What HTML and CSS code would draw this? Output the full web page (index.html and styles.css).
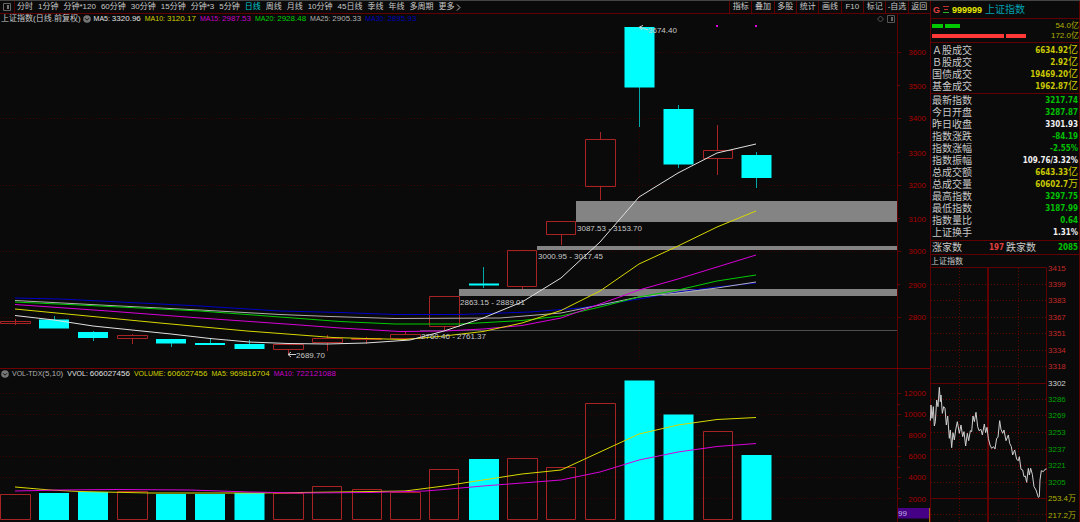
FILE: index.html
```html
<!DOCTYPE html>
<html lang="zh-CN">
<head>
<meta charset="utf-8">
<title>上证指数</title>
<link rel="stylesheet" href="styles.css">
</head>
<body>
<div class="app">
  <main class="main">
    <header class="toolbar">
      <button class="panel-toggle" aria-label="面板"><svg width="8" height="8" viewBox="0 0 8 8"><path d="M.5.5h7v7h-7z" fill="none" stroke="#666"/><path d="M4 2h2v4H4z" fill="#777"/></svg></button>
      <nav class="periods">
        <button>分时</button><button>1分钟</button><button>分钟*120</button><button>60分钟</button><button>30分钟</button><button>15分钟</button><button>分钟*3</button><button>5分钟</button><button class="active">日线</button><button>周线</button><button>月线</button><button>10分钟</button><button>45日线</button><button>季线</button><button>年线</button><button>多周期</button><button class="more">更多<svg width="5" height="7" viewBox="0 0 5 7"><path d="M1 .5 4 3.500 1 6.500" fill="none" stroke="#bbb"/></svg></button>
      </nav>
      <nav class="tools">
        <button>指标</button><button>叠加</button><button>多股</button><button>统计</button><button>画线</button><button>F10</button><button>标记</button><button>-自选</button><button>返回</button>
      </nav>
    </header>

    <section class="pane">
      <div class="legend-row">
        <div class="legend">
          <span class="title">上证指数(日线.前复权)</span>
          <svg class="round" width="8" height="8" viewBox="0 0 8 8"><circle cx="4" cy="4" r="3.800" fill="#777"/><path d="M2 3.200 4 5.200 6 3.200" fill="none" stroke="#111"/></svg>
          <span class="c-white">MA5: <b>3320.96</b></span><span class="c-yellow">MA10: <b>3120.17</b></span><span class="c-magenta">MA15: <b>2987.53</b></span><span class="c-green">MA20: <b>2928.48</b></span><span class="c-gray">MA25: <b>2905.33</b></span><span class="c-blue">MA30: <b>2895.93</b></span>
          <svg class="corner" width="18" height="8" viewBox="0 0 18 8"><path d="M3.500 1 6.500 4 3.500 7 .5 4z" fill="none" stroke="#555"/><path d="M10.500.5h7v7h-7z" fill="none" stroke="#555"/><path d="M14 2h2v4h-2z" fill="#666"/></svg>
        </div>
        <div class="axis-head"></div>
      </div>
      <svg class="plot" viewBox="0 24 930 344">
        <path class="grid" d="M0 52.500H897M0 118.500H897M0 185.500H897M0 251.500H897M0 317.500H897M639.500 128V360"/>
        <path class="axis" d="M897.500 24V368M898 52.500h3M898 85.500h2M898 118.500h3M898 152.500h2M898 185.500h3M898 218.500h2M898 251.500h3M898 284.500h2M898 317.500h3"/>
        <g class="axis-text">
          <text x="926" y="55">3600</text><text x="926" y="89">3500</text><text x="926" y="121">3400</text><text x="926" y="156">3300</text><text x="926" y="188">3200</text><text x="926" y="222">3100</text><text x="926" y="254">3000</text><text x="926" y="288">2900</text><text x="926" y="320">2800</text>
        </g>
        <path class="gap" d="M576 201H897V222H576zM537 246H897V250H537zM459 289H897V296H459z"/>
        <path class="gap-line" d="M420 330.500H897"/>
        <path class="up" d="M.5 321.500h30v2h-30zM15.500 319v6M117.500 335.500h30v3h-30zM132.500 334v1M132.500 339v5M273.500 344.500h30v5h-30zM288.500 350v4M312.500 338.500h30v4h-30zM327.500 335v3M327.500 343v8M351.500 338.500h30v1h-30zM366.500 337v7M390.500 334.500h30v4h-30zM405.500 331v3M429.500 296.500h30v30h-30zM444.500 327v4M507.500 250.500h29v36h-29zM522.500 287v2M546.500 221.500h29v13h-29zM561.500 235v10M585.500 139.500h30v47h-30zM600.500 132v7M600.500 187v13M703.500 150.500h29v8h-29zM717.500 125v25M717.500 159v16"/>
        <path class="wick" d="M54.500 316v4M93.500 331v10M171.500 343v4M210.500 338v7M249.500 340v4M483.500 267v21M639.500 87v40M678.500 105v63M756.500 152v36"/>
        <path class="down" d="M39 319.500h30v9H39zM78 332h30v6H78zM156 339h30v4.500h-30zM195 343h30v2h-30zM234.500 344h30v5h-30zM469 283.500h30v2h-30zM624.500 27h30v60.500h-30zM663.500 109h30v55.500h-30zM741.500 155h30v23h-30z"/>
        <g class="lines">
          <polyline stroke="#0000c8" points="15,298 60,299 100,301 200,306 280,311 340,312.500 395,314.500 460,314.500 530,312 580,308 639,299 678,292 717,287 756,283"/>
          <polyline stroke="#b0b0b0" points="15,300.500 100,305 200,310 280,314.500 330,316.500 395,318.500 500,318 561,313 600,305 639,297 678,293 717,288 756,282"/>
          <polyline stroke="#00cc00" points="15,302 100,306 200,311 280,317 340,321.500 395,324 460,324 522,320.500 561,316 600,307 639,297 678,290 717,281 756,275"/>
          <polyline stroke="#d800d8" points="15,304.500 108,311 200,318 300,325 340,328 400,331.500 444,331 483,329 522,325.500 561,318 600,304 639,290 678,279 717,267 756,255"/>
          <polyline stroke="#d8d800" points="15,309 67,314 160,323 247,331 300,335 333,337.500 366,338.500 405,339.500 444,336 483,331.500 522,323 561,310.500 600,291 639,264 678,246 717,227 756,211"/>
          <polyline stroke="#e0e0e0" points="15,315.500 54,320 93,326 132,330 171,334 210,338.500 249,342 288,343.500 327,344 366,343 410,340 444,331 483,318 522,302 561,278 600,242 639,197 678,173 717,153 756,144"/>
        </g>
        <path class="mark" d="M716 25h2v2h-2zM755 25h2v2h-2z"/>
        <path class="arrow" d="M296 354.500H288M291 352 288 354.500 291 357M648 30 639.500 27M643 25.500 639.500 27 642 30"/>
        <g class="note">
          <text x="648" y="33">3674.40</text><text x="577" y="231">3087.53 - 3153.70</text><text x="538" y="259">3000.95 - 3017.45</text><text x="460" y="305">2863.15 - 2889.01</text><text x="421" y="339">2760.46 - 2761.37</text><text x="296" y="358">2689.70</text>
        </g>
      </svg>
    </section>

    <section class="pane volume">
      <div class="legend-row">
        <div class="legend">
          <svg class="round" width="8" height="8" viewBox="0 0 8 8"><circle cx="4" cy="4" r="3.800" fill="#777"/><path d="M2 3.200 4 5.200 6 3.200" fill="none" stroke="#111"/></svg>
          <span class="c-gray">VOL-TDX<b>(5,10)</b></span><span class="c-white">VVOL: <b>606027456</b></span><span class="c-yellow">VOLUME: <b>606027456</b></span><span class="c-yellow">MA5: <b>969816704</b></span><span class="c-magenta">MA10: <b>722121088</b></span>
        </div>
        <div class="axis-head"></div>
      </div>
      <svg class="plot" viewBox="0 379 930 143">
        <path class="grid" d="M0 393.500H897M0 414.500H897M0 435.500H897M0 456.500H897M0 477.500H897M0 498.500H897"/>
        <path class="axis" d="M897.500 379V522M898 393.500h3M898 404.500h2M898 414.500h3M898 425.500h2M898 435.500h3M898 446.500h2M898 456.500h3M898 467.500h2M898 477.500h3M898 488.500h2M898 498.500h3"/>
        <g class="axis-text">
          <text x="926" y="396">12000</text><text x="926" y="417">10000</text><text x="926" y="438">8000</text><text x="926" y="459">6000</text><text x="926" y="480">4000</text><text x="926" y="502">2000</text>
        </g>
        <path class="up" d="M.5 519.500V494.500h30v25zM117.500 519.500V491.500h30v28zM273.500 519.500V493.500h30v26zM312.500 519.500V486.500h29v33zM352.500 519.500V489.500h29v30zM390.500 519.500V492.500h30v27zM429.500 519.500V469.500h29v50zM507.500 519.500V458.500h30v61zM546.500 519.500V467.500h29v52zM585.500 519.500V403.500h30v116zM703.500 519.500V431.500h29v88z"/>
        <path class="down" d="M39 520V493h30v27zM78 520V492h30v28zM156 520V494h30v26zM195 520V494h30v26zM234.500 520V493h30v27zM469 520V459h30v61zM624.500 520V380.500h30V520zM663.500 520V414.500h30V520zM741.500 520V455h30v65z"/>
        <g class="lines">
          <polyline stroke="#d8d800" points="15,487 50,490 80,491.500 150,493 260,493 340,492 405,491 444,486 483,480 522,474 561,470 600,452 639,434 678,425 717,419.500 756,417.500"/>
          <polyline stroke="#d800d8" points="15,491 60,490 115,489.500 190,490 250,492 300,493 370,492.500 425,491 444,489.500 483,486 522,483 561,480 600,472 639,460 678,452 717,446.500 756,443.500"/>
        </g>
        <path d="M898 508H929V518.500H898z" fill="#450085"/>
        <path d="M929.500 508V522" stroke="#a06a10"/>
        <text class="badge" x="898" y="516">99</text>
      </svg>
    </section>
  </main>

  <aside class="side">
    <h1 class="symbol"><span class="g">G</span><svg width="6" height="7" viewBox="0 0 6 7"><path d="M0 .5h6M1 3.500h4" stroke="#c03030"/><path d="M0 6.500h6" stroke="#30b030"/></svg><span class="code">999999</span><span class="name">上证指数</span></h1>
    <div class="flows">
      <div class="flow green"><i class="s11"></i><i class="s15"></i><span>54.0亿</span></div>
      <div class="flow red"><i class="s72"></i><i class="s20"></i><span>172.0亿</span></div>
    </div>
    <table class="quotes turnover">
      <tr><th>Ａ股成交</th><td class="y">6634.92<b>亿</b></td></tr>
      <tr><th>Ｂ股成交</th><td class="y">2.92<b>亿</b></td></tr>
      <tr><th>国债成交</th><td class="y">19469.20<b>亿</b></td></tr>
      <tr><th>基金成交</th><td class="y">1962.87<b>亿</b></td></tr>
    </table>
    <table class="quotes details">
      <tr><th>最新指数</th><td class="dn">3217.74</td></tr>
      <tr><th>今日开盘</th><td class="dn">3287.87</td></tr>
      <tr><th>昨日收盘</th><td>3301.93</td></tr>
      <tr><th>指数涨跌</th><td class="dn">-84.19</td></tr>
      <tr><th>指数涨幅</th><td class="dn">-2.55%</td></tr>
      <tr><th>指数振幅</th><td>109.76/3.32%</td></tr>
      <tr><th>总成交额</th><td class="y">6643.33<b>亿</b></td></tr>
      <tr><th>总成交量</th><td class="y">60602.7<b>万</b></td></tr>
      <tr><th>最高指数</th><td class="dn">3297.75</td></tr>
      <tr><th>最低指数</th><td class="dn">3187.99</td></tr>
      <tr><th>指数量比</th><td class="dn">0.64</td></tr>
      <tr><th>上证换手</th><td>1.31%</td></tr>
    </table>
    <table class="quotes breadth">
      <tr><th class="first">涨家数</th><td class="rise">197</td><th class="fall">跌家数</th><td class="dn">2085</td></tr>
    </table>
    <h2 class="mini-title">上证指数</h2>
    <svg class="plot mini" viewBox="931 267 148 255">
      <path class="grid strong" d="M931 284.500H1046M931 300.500H1046M931 317.500H1046M931 333.500H1046M931 350.500H1046M931 366.500H1046M931 399.500H1046M931 415.500H1046M931 432.500H1046M931 449.500H1046M931 465.500H1046M931 482.500H1046M931 514.500H1046M959.500 268V522M1018.500 268V522"/>
      <path class="axis" d="M931 267.500H1046.500V522M931 383.500H1046M931 498.500H1046"/>
      <path class="axis" d="M988 268V522" stroke-width="2"/>
      <g class="mini-text">
        <g class="up-t"><text x="1048" y="271">3415</text><text x="1048" y="287">3399</text><text x="1048" y="303">3383</text><text x="1048" y="320">3367</text><text x="1048" y="336">3351</text><text x="1048" y="353">3334</text><text x="1048" y="369">3318</text></g>
        <text x="1048" y="386">3302</text>
        <g class="dn-t"><text x="1048" y="402">3286</text><text x="1048" y="418">3269</text><text x="1048" y="435">3253</text><text x="1048" y="452">3237</text><text x="1048" y="468">3221</text><text x="1048" y="485">3205</text></g>
        <g class="vol-t"><text x="1048" y="501">253.4万</text><text x="1048" y="518">217.2万</text></g>
      </g>
      <g transform="translate(925 380) scale(.33333)">
        <polyline class="intraday" points="16,122 18,75 21,115 25,80 28,138 31,125 35,60 39,80 43,22 46,65 48,45 52,100 56,80 60,85 64,135 68,108 73,175 76,150 80,203 84,158 88,180 92,150 97,125 103,160 108,135 113,170 117,155 122,198 127,160 131,182 136,152 140,155 144,108 148,125 153,97 158,140 162,152 168,148 172,165 178,132 182,158 186,142 190,175 195,195 200,205 206,200 210,207 215,175 219,172 224,122 228,148 233,160 237,150 243,182 250,165 254,190 259,200 263,225 269,210 275,238 280,242 283,230 288,268 293,270 297,290 301,288 305,307 310,265 313,285 317,265 322,283 327,320 333,330 340,352 343,350 345,300 349,272 355,275 360,268 365,267"/>
      </g>
    </svg>
  </aside>
</div>
</body>
</html>
```
FILE: styles.css
```css
* { box-sizing: border-box; }
body {
  margin: 0;
  background: #0a0a0a;
  color: #c8c8c8;
  font: 8px/10px "Liberation Sans", "Noto Sans CJK SC", sans-serif;
}
button {
  margin: 0;
  padding: 0;
  border: 0;
  background: none;
  color: inherit;
  font: inherit;
  white-space: nowrap;
}
svg { display: block; flex: none; }
.app { display: flex; min-height: 100vh; border-top: 1px solid #444; overflow: hidden; }
.main { flex: 1; min-width: 0; }

.toolbar { display: flex; height: 13px; border-bottom: 1px solid #600000; }
.panel-toggle { display: flex; align-items: center; padding: 0 3px; border-right: 1px solid #500000; }
.periods { display: flex; flex: 1; gap: 5px; padding-left: 2px; line-height: 12px; }
.periods .active { color: #00c8d0; }
.more { display: flex; align-items: center; gap: 2px; }
.tools { display: grid; grid-template-columns: repeat(9, 1fr); width: 201px; }
.tools button { border-left: 1px solid #600000; line-height: 12px; text-align: center; }

.volume { border-top: 1px solid #700000; }
.legend-row { display: flex; height: 10px; }
.legend {
  display: flex;
  flex: 1;
  align-items: center;
  gap: 4px;
  padding-left: 1px;
  white-space: nowrap;
  font-size: 7px;
  line-height: 10px;
}
.legend b { font-size: 8px; font-weight: 400; }
.legend .title { margin-right: -2px; font-size: 8px; }
.round { margin-right: -1px; }
.corner { margin-left: auto; margin-right: 2px; }
.axis-head { width: 33px; border-left: 1px solid #600000; }
.c-white { color: #e0e0e0; }
.c-gray { color: #b0b0b0; }
.c-yellow { color: #d0d000; }
.c-magenta { color: #c800c8; }
.c-green { color: #00d000; }
.c-blue { color: #0000b8; }

.plot { width: 100%; height: auto; }
.mini { overflow: visible; }
.grid { fill: none; stroke: #380000; stroke-dasharray: 1 2; }
.grid.strong { stroke: #600000; }
.axis { fill: none; stroke: #600000; }
.axis-text { fill: #a80000; font-size: 8px; text-anchor: end; }
.gap { fill: #848484; }
.gap-line { stroke: #505050; }
.up { fill: none; stroke: #a82424; }
.wick { stroke: #00a8a8; }
.down { fill: #00ffff; }
.lines { fill: none; stroke-width: 1; }
.mark { fill: #e000e0; }
.arrow { fill: none; stroke: #d0d0d0; }
.note { fill: #c8c8c8; font-size: 8px; }
.badge { fill: #c0b0e0; font-size: 8px; }

.side { flex: 0 0 150px; border: solid #600000; border-width: 0 1px; }
.symbol {
  display: flex;
  align-items: center;
  gap: 3px;
  height: 18px;
  margin: 0;
  padding-left: 2px;
  border-bottom: 1px solid #600000;
  font-size: 9px;
}
.symbol .g { color: #e04040; }
.symbol .code { color: #e8e800; }
.symbol .name { color: #00a0b0; font-size: 10px; font-weight: 400; }
.flows { padding: 2px 0 1px; border-bottom: 1px solid #600000; }
.flow { display: flex; align-items: center; gap: 2px; height: 10px; padding-left: 1px; }
.flow i { height: 4px; }
.flow span { margin-left: auto; color: #b0b000; }
.green i { background: #00c800; }
.red i { background: #ff3838; }
.s11 { width: 11px; }
.s15 { width: 15px; }
.s72 { width: 72px; }
.s20 { width: 20px; }
.quotes {
  width: 100%;
  border-collapse: separate;
  border-spacing: 0;
  border-bottom: 1px solid #600000;
  padding-top: 1px;
}
.quotes th, .quotes td { height: 12px; padding: 0 1px; line-height: 12px; white-space: nowrap; }
.quotes th { font-size: 10px; font-weight: 400; text-align: left; }
.quotes td {
  color: #f0f0f0;
  font-family: "DejaVu Sans Condensed", "Noto Sans CJK SC", sans-serif;
  font-size: 8px;
  font-weight: 700;
  text-align: right;
}
.quotes b { font: 400 10px "Liberation Sans", "Noto Sans CJK SC", sans-serif; line-height: 8px; }
.quotes .y { color: #c8c800; }
.quotes .dn { color: #00c000; }
.turnover { padding-top: 2px; }
.details { padding-bottom: 1px; }
.breadth .first { width: 32px; }
.breadth .rise { width: 42px; color: #e04040; }
.breadth .fall { width: 34px; }
.mini-title { height: 12px; margin: 0; font-size: 8px; line-height: 13px; font-weight: 400; }
.mini-text { fill: #d0d0d0; font-size: 8px; }
.up-t { fill: #c02828; }
.dn-t { fill: #00a000; }
.vol-t { fill: #b0b000; }
.intraday { fill: none; stroke: #d0d0d0; stroke-width: 3; }
```
